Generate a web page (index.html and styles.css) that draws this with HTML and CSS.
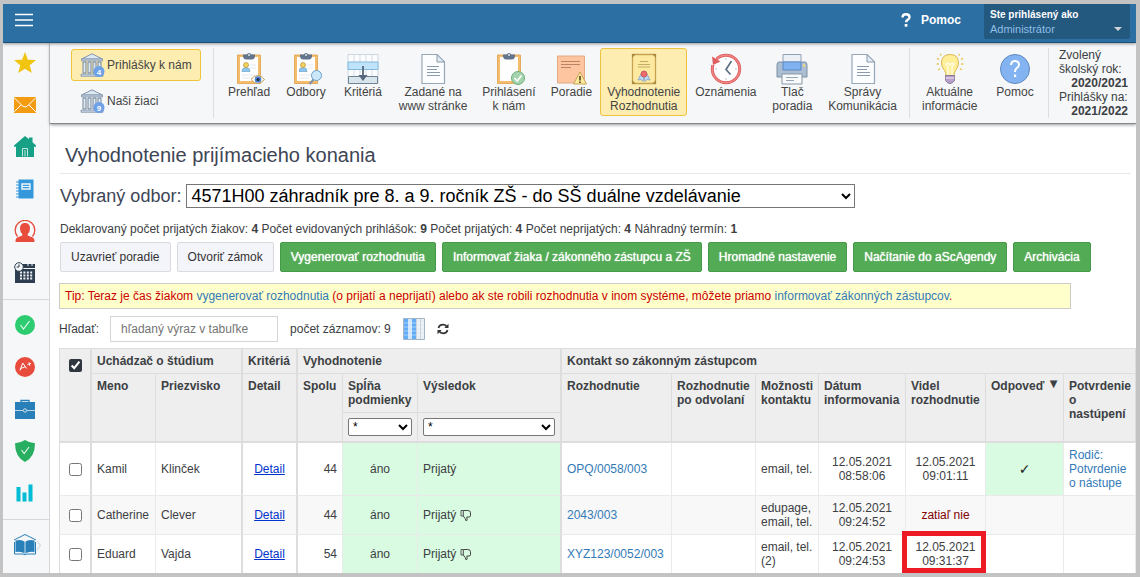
FILE: index.html
```html
<!DOCTYPE html>
<html lang="sk">
<head>
<meta charset="utf-8">
<title>Vyhodnotenie prijímacieho konania</title>
<link rel="stylesheet" href="styles.css">
</head>
<body>
<svg class="defs" width="0" height="0" aria-hidden="true">
  <symbol id="bank" viewBox="0 0 24 24">
    <path d="M12 .8 1.500 6h21z" fill="#dce9f3" stroke="#8496aa"/>
    <path d="M1.500 6h21v2h-21zM1 21h22v2.300H1z" fill="#c3d1df" stroke="#8496aa" stroke-width=".8"/>
    <path d="M3 9h3v11H3zM8 9h3v11H8zM13 9h3v11h-3zM18 9h3v11h-3z" fill="#dfe8f0" stroke="#75889d"/>
  </symbol>
  <symbol id="clip" viewBox="0 0 32 32">
    <path d="M4.500 2h23v28.500h-23z" fill="#f3bd6c" stroke="#e0a04a" stroke-width=".8"/>
    <path d="M7 4h18v24H7z" fill="#fefefe"/>
    <path d="M10 1.500h3.500q2.500-3 5 0H22V4q-1 2.500-3 2.500h-6Q11 6.500 10 4z" fill="#63758c"/>
    <circle cx="16" cy="2" r="1" fill="#dfe7ee"/>
  </symbol>
  <symbol id="person" viewBox="0 0 32 32">
    <path d="M17 12h6M17 15h6M9 22h13M9 25h10" stroke="#e4eaf0" fill="none"/>
    <path d="M9 18.500q0-4 4-4t4 4z" fill="#8fc6ec" stroke="#5e9bc6" stroke-width=".6"/>
    <circle cx="13" cy="12" r="2.500" fill="#f3d55e" stroke="#b08e38" stroke-width=".7"/>
  </symbol>
  <symbol id="doc" viewBox="0 0 32 32">
    <path d="M5 1.500h15l7.500 7.500v21.500H5z" fill="#fbfdfe" stroke="#98a8b8" stroke-width="1.200"/>
    <path d="M20 1.500V9h7.500z" fill="#e4edf4" stroke="#8799aa"/>
    <path d="M10 13.500h12M10 16.500h10M10 19.500h13M10 22.500h13" stroke="#8b9bad" stroke-width="1.200"/>
  </symbol>
  <symbol id="thumb" viewBox="0 0 12 13">
    <path d="M3.300 1.500h4.500q2.700 0 2.700 2.300v3q0 1.200-1.500 1.200H6.800q1 4-.6 4Q5.500 9.500 3.300 7z" fill="none" stroke="#454545"/>
    <path d="M3 1.500H1V7h2" fill="none" stroke="#454545" stroke-width=".9"/>
  </symbol>
</svg>

<div class="app">
  <header class="topbar">
    <button class="burger" aria-label="Menu"><svg width="18" height="14" viewBox="0 0 18 14"><path d="M0 1.500h18M0 7h18M0 12.500h18" stroke="#fff" stroke-width="1.600"/></svg></button>
    <a class="help" href="#"><svg width="10" height="14" viewBox="0 0 10 14"><path d="M1.500 4.500Q1.600 1.300 5 1.300t3.500 2.900q0 1.700-1.900 2.700-1.500.9-1.500 2.400" fill="none" stroke="#fff" stroke-width="2.400"/><path d="M3.700 11h2.700v2.700H3.700z" fill="#fff"/></svg>Pomoc</a>
    <button class="user"><span class="user-label">Ste prihlásený ako</span><span class="user-name">Administrátor</span><svg class="caret" width="8" height="4" viewBox="0 0 8 4"><path d="M0 0h8L4 4z" fill="#d0d4d8"/></svg></button>
  </header>

  <div class="body">
    <nav class="side" aria-label="Moduly">
      <div class="side-group">
        <a href="#" aria-label="Obľúbené"><svg viewBox="0 0 22 22"><path d="M11 0l2.900 7.700 8.100.4-6.300 5.200L17.800 21 11 16.700 4.200 21l2.100-7.700L0 8.100l8.100-.4z" fill="#f1c40f"/></svg></a>
        <a href="#" aria-label="Správy"><svg viewBox="0 0 22 22"><path d="M0 3h22v16H0z" fill="#f39c12"/><path d="M0 3.500 8.500 12q2.500 2 5 0L22 3.500M0 18l7-7M22 18l-7-7" fill="none" stroke="#fff" stroke-width="1"/></svg></a>
        <a href="#" aria-label="Domov"><svg viewBox="0 0 22 22"><path d="M0 9.500 11 0l4 3.200V1.500h3.500v4.700L22 9.500v1.200h-2V21H2V10.700H0z" fill="#16a085"/><path d="M8.500 20.500v-8h5v8M11 14v6.500" fill="none" stroke="#d9f0eb" stroke-width=".9"/></svg></a>
        <a href="#" aria-label="Triedna kniha"><svg viewBox="0 0 22 22"><path d="M4.500 1.500h15v19h-15z" fill="#3498db"/><path d="M2 4h4M2 7h4M2 10h4M2 13h4M2 16h4M2 19h4" stroke="#3498db"/><path d="M8 6h8v5H8z" fill="none" stroke="#eef7fc" stroke-width="1.400"/><path d="M8 8.500h8" stroke="#eef7fc"/></svg></a>
        <a href="#" aria-label="Používatelia"><svg viewBox="0 0 22 22"><path d="M3.500 16.500A9.800 9.800 0 1 1 18.500 16.500" fill="none" stroke="#e74c3c" stroke-width="1.300"/><path d="M11 3q5 0 5 5.500 0 3.500-2.300 5.500v1.500l5 2q1.800.8 1.800 4.500h-19q0-3.700 1.800-4.500l5-2V14Q6 12 6 8.500 6 3 11 3z" fill="#e74c3c"/></svg></a>
        <a href="#" aria-label="Rozvrh"><svg viewBox="0 0 22 22"><path d="M2 2h19v4H2zM1 7h20v14H1z" fill="#2c3e50"/><path d="M6 10.500h13M6 13.500h13M6 16.500h13" stroke="#f0f3f5" stroke-width="1.800" stroke-dasharray="2 1.400"/><circle cx="5" cy="5" r="4.300" fill="#f5f7f9" stroke="#2c3e50"/><path d="M5 2.300V5H2.700" fill="none" stroke="#2c3e50"/><path d="M14 1v3M18 1v3" stroke="#f5f7f9"/></svg></a>
      </div>
      <div class="side-group">
        <a href="#" aria-label="Dochádzka"><svg viewBox="0 0 22 22"><circle cx="11" cy="11" r="10" fill="#2ecc71"/><path d="m6.500 11 3 4 6-8" fill="none" stroke="#eafaf1" stroke-width="1.200"/></svg></a>
        <a href="#" aria-label="Známky"><svg viewBox="0 0 22 22"><circle cx="11" cy="11" r="10" fill="#e74c3c"/><path d="m6 14.500 2.700-7.500 4 5.500M6.500 12.500l5-1.800M13.500 8.500l3.500-1M15 6.300l.8 3.500" fill="none" stroke="#fff"/></svg></a>
        <a href="#" aria-label="Agenda"><svg viewBox="0 0 22 22"><path d="M1 4h20v17H1z" fill="#2980b9"/><path d="M7 4.500V2.500h8v2" fill="none" stroke="#2980b9" stroke-width="1.300"/><path d="M1 12.500h8M13 12.500h8" stroke="#b9d6e8"/><circle cx="11" cy="12.500" r="1.700" fill="none" stroke="#cfe3f0"/></svg></a>
        <a href="#" aria-label="Bezpečnosť"><svg viewBox="0 0 22 22"><path d="M11 0q5 3.200 10 3.300 0 13.700-10 18.700Q1 17 1 3.300 6 3.200 11 0z" fill="#27ae60"/><path d="m7.500 10 2.700 3.500L15 7" fill="none" stroke="#e9f7ef" stroke-width="1.100"/></svg></a>
        <a href="#" aria-label="Štatistiky"><svg viewBox="0 0 22 22"><path d="M2.500 5h4v14.500h-4zM8.500 10.500h4v9h-4zM14.500 2.500h4v17h-4z" fill="#00bcd4"/></svg></a>
      </div>
      <div class="side-group">
        <a href="#" aria-label="Knižnica"><svg class="wide" viewBox="0 0 27 22"><path d="M0 6 11 .500 22 6" fill="none" stroke="#2980b9"/><path d="M1.500 6.500Q7.500 5 11 8q3.500-3 9.500-1.500V18Q15 17 11 19.500 7 17 1.500 18z" fill="#2980b9"/><path d="M.5 8v12H9q2 1.500 4 0h8.500V8" fill="none" stroke="#2980b9"/><path d="M11 8v11" stroke="#cfe3f0"/><path d="m23 7 3.500 4.500L23 16" fill="none" stroke="#d3d7db" stroke-width="1.200"/></svg></a>
      </div>
    </nav>

    <div class="main">
      <nav class="ribbon" aria-label="Prijímacie konanie">
        <div class="modes">
          <a class="mode active" href="#"><svg width="25" height="24" viewBox="0 0 25 24"><use href="#bank" width="24" height="24"/><circle cx="19" cy="18.500" r="5.500" fill="#6ea1e8"/><text class="badge" x="19" y="21.500" text-anchor="middle">4</text></svg>Prihlášky k nám</a>
          <a class="mode" href="#"><svg width="25" height="24" viewBox="0 0 25 24"><use href="#bank" width="24" height="24"/><circle cx="19" cy="18.500" r="5.500" fill="#6ea1e8"/><text class="badge" x="19" y="21.500" text-anchor="middle">9</text></svg>Naši žiaci</a>
        </div>
        <div class="tools">
          <a class="tool" href="#"><svg viewBox="0 0 32 32"><use href="#clip"/><use href="#person"/><path d="M18 26.500q6.500-8 13.500 0-7 8-13.500 0z" fill="#fff" stroke="#c29a53"/><circle cx="25" cy="26.500" r="3.300" fill="#4f82cf"/><circle cx="25" cy="26.500" r="1.500" fill="#222f4b"/></svg>Prehľad</a>
          <a class="tool" href="#"><svg viewBox="0 0 32 32"><use href="#clip"/><use href="#person"/><path d="m24 26-4.500 5" stroke="#7f94a8" stroke-width="2.200"/><circle cx="26.500" cy="22.500" r="5" fill="#cbe8fb" stroke="#6f9fc5"/></svg>Odbory</a>
          <a class="tool" href="#"><svg viewBox="0 0 32 32"><path d="M1 1.500h30v29H1z" fill="#fbfcfd" stroke="#cdd6df"/><path d="M7 1.500v29M13 1.500v29M19 1.500v29M25 1.500v29" stroke="#d5dde5"/><path d="M1 9h30v7.500H1z" fill="#bfe3fb" stroke="#84b9dc"/><path d="M1.500 23.500h29v7h-29z" fill="#d9e5ec" stroke="#6f8394"/><path d="M16 13v11" stroke="#54677d" stroke-width="1.800"/><path d="M11.500 22h9L16 28z" fill="#54677d"/></svg>Kritériá</a>
          <a class="tool" href="#"><svg viewBox="0 0 32 32"><use href="#doc"/></svg>Zadané na<br>www stránke</a>
          <a class="tool" href="#"><svg viewBox="0 0 32 32"><use href="#clip"/><circle cx="25" cy="25" r="6.500" fill="#a5d3ad" stroke="#6fae7c"/><path d="m21.500 25 2.700 3 4.300-5.500" fill="none" stroke="#fff" stroke-width="1.500"/></svg>Prihlásení<br>k nám</a>
          <a class="tool" href="#"><svg viewBox="0 0 32 32"><path d="M2.500 3h27v27h-27z" fill="#fdc5a0" stroke="#e5a886"/><path d="M6 8.500h19M6 11.500h19M6 14.500h10" stroke="#b98364" stroke-width="1.100"/><path d="m25 19 6.500 12h-13z" fill="#fdea9d" stroke="#c5a55b"/><path d="M25 23v4.500M25 28.500V30" stroke="#5b4b28" stroke-width="1.700"/></svg>Poradie</a>
          <a class="tool active" href="#"><svg viewBox="0 0 32 32"><path d="M4.500 1.500h23v29h-23z" fill="#fdeaa0" stroke="#c5a352" stroke-width="1.300"/><path d="M4 1h4L4 5zM28 1h-4l4 4zM4 31h4l-4-4zM28 31h-4l4-4z" fill="#ab8a42"/><path d="M12 8.500h8M10 11.500h12M10 14h12" stroke="#c1ac68" stroke-width="1.100"/><path d="m13 21-3 6 3-.5 2 2 1-5 1 5 2-2 3 .500-3-6z" fill="#bcd9f4" stroke="#7f9fc8" stroke-width=".8"/><circle cx="16" cy="21" r="3" fill="#ee6b6c" stroke="#c0505a" stroke-width=".8"/></svg>Vyhodnotenie<br>Rozhodnutia</a>
          <a class="tool" href="#"><svg viewBox="0 0 32 32"><circle cx="16" cy="16" r="13.700" fill="#fff" stroke="#dc5a5c" stroke-width="3"/><circle cx="16" cy="16" r="13.700" fill="none" stroke="#f18584" stroke-width="1.500"/><path d="M0 5h6v7H0z" fill="#f5f7f9"/><path d="M2 3.500 10.500 8.500 3 12z" fill="#df5f60"/><path d="M21.500 8 16 16.500l4.500 5" fill="none" stroke="#5d7082" stroke-width="1.700"/><path d="M16 5v2M16 25v2M25 16h2M5 16h2" stroke="#b7c4cf"/></svg>Oznámenia</a>
          <a class="tool" href="#"><svg viewBox="0 0 32 32"><path d="M3 9h26q2 0 2 3v12H1V12q0-3 2-3z" fill="#acbed2" stroke="#7c90a6"/><path d="M7 1.500h18V9H7z" fill="#eaf0f5" stroke="#91a2b2"/><path d="M7 9h18v8H7z" fill="#80b2ef" stroke="#5c88c3"/><path d="M6 21h20v10H6z" fill="#f8fafc" stroke="#8796a6"/><path d="M10 24.500h12M10 27.500h8" stroke="#98a6b5"/><circle cx="28" cy="12.500" r="1.200" fill="#f6db74"/></svg>Tlač<br>poradia</a>
          <a class="tool" href="#"><svg viewBox="0 0 32 32"><use href="#doc"/></svg>Správy<br>Komunikácia</a>
        </div>
        <div class="tools last">
          <a class="tool" href="#"><svg viewBox="0 0 32 32"><path d="M16 1.500q8.500 0 8.500 8.500 0 4-3 7.500-1.500 2-1.500 5h-8q0-3-1.500-5-3-3.500-3-7.500 0-8.500 8.500-8.500z" fill="#feef98" stroke="#dcb850"/><path d="M14 22V14l-2-3q2-2 4 1 2-3 4-1l-2 3v8" fill="none" stroke="#fffbe2" stroke-width="1.500"/><path d="M11.500 22.500h9v5q-2 3-4.500 3t-4.500-3z" fill="#b9a2c9" stroke="#87759a"/><path d="M11.500 25h9" stroke="#f0e6f7"/><path d="m6 1 1.500 1.500M26 1l-1.500 1.500M3 5.500l2 1M29 5.500l-2 1M2.500 11H5M29.500 11H27M4 17l2-1.500M28 17l-2-1.500" stroke="#e8cb63" stroke-width="1.500"/></svg>Aktuálne<br>informácie</a>
          <a class="tool" href="#"><svg viewBox="0 0 32 32"><circle cx="16" cy="16" r="14.500" fill="#84b3f2" stroke="#5e88bf"/><path d="M12 12q.4-4 4-4t4 3.500q0 2.400-2.500 3.800-1.500 1-1.500 3.700" fill="none" stroke="#fff" stroke-width="2"/><path d="M15 21.500h2.200V24H15z" fill="#fff"/></svg>Pomoc</a>
        </div>
        <div class="year"><div>Zvolený školský rok:</div><b>2020/2021</b><div>Prihlášky na:</div><b>2021/2022</b></div>
      </nav>

      <main class="content">
        <h1>Vyhodnotenie prijímacieho konania</h1>
        <div class="dept">
          <label for="dept">Vybraný odbor:</label>
          <select id="dept"><option>4571H00 záhradník pre 8. a 9. ročník ZŠ - do SŠ duálne vzdelávanie</option></select>
        </div>
        <p class="stats">Deklarovaný počet prijatých žiakov: <b>4</b> Počet evidovaných prihlášok: <b>9</b> Počet prijatých: <b>4</b> Počet neprijatých: <b>4</b> Náhradný termín: <b>1</b></p>
        <div class="actions">
          <button class="btn">Uzavrieť poradie</button>
          <button class="btn">Otvoriť zámok</button>
          <button class="btn green">Vygenerovať rozhodnutia</button>
          <button class="btn green">Informovať žiaka / zákonného zástupcu a ZŠ</button>
          <button class="btn green">Hromadné nastavenie</button>
          <button class="btn green">Načítanie do aScAgendy</button>
          <button class="btn green">Archivácia</button>
        </div>
        <p class="tip">Tip: Teraz je čas žiakom <a href="#">vygenerovať rozhodnutia</a> (o prijatí a neprijatí) alebo ak ste robili rozhodnutia v inom systéme, môžete priamo <a href="#">informovať zákonných zástupcov</a>.</p>
        <div class="search">
          <label for="q">Hľadať:</label>
          <input id="q" type="text" placeholder="hľadaný výraz v tabuľke">
          <span>počet záznamov: 9</span>
          <button class="icon-btn" aria-label="Stĺpce"><svg width="22" height="22" viewBox="0 0 22 22"><path d="M.5.500h21v21H.5z" fill="#e8eef3" stroke="#a3b4c4"/><path d="M1 1h4v20H1zM9 1h4v20H9z" fill="#62acf8"/><path d="M5 1h4v20H5z" fill="#cfe6fb"/><path d="M1 5h20M1 9h20M1 13h20M1 17h20" stroke="#fff" stroke-opacity=".45"/><path d="M17.500 1v20M13.500 1v20" stroke="#ccd6df"/></svg></button>
          <button class="icon-btn" aria-label="Obnoviť"><svg width="12" height="12" viewBox="0 0 12 12"><path d="M1.500 5Q2.300 1.700 6 1.700q2.200 0 3.700 1.800M10.500 7Q9.700 10.300 6 10.300 3.800 10.300 2.300 8.500" fill="none" stroke="#333" stroke-width="1.800"/><path d="M11.500.8V5H7.300zM.5 11.200V7h4.200z" fill="#333"/></svg></button>
        </div>

        <table class="grid">
          <colgroup><col class="c-check"><col class="c-name"><col class="c-surname"><col class="c-crit"><col class="c-sum"><col class="c-cond"><col class="c-result"><col class="c-dec"><col class="c-appeal"><col class="c-contact"><col class="c-date"><col class="c-seen"><col class="c-answer"><col></colgroup>
          <thead>
            <tr>
              <th rowspan="3" class="g center"><input type="checkbox" class="all" aria-label="Vybrať všetko" checked></th>
              <th colspan="2" class="g">Uchádzač o štúdium</th>
              <th class="g">Kritériá</th>
              <th colspan="3" class="g">Vyhodnotenie</th>
              <th colspan="7">Kontakt so zákonným zástupcom</th>
            </tr>
            <tr>
              <th rowspan="2">Meno</th>
              <th rowspan="2" class="g">Priezvisko</th>
              <th rowspan="2" class="g">Detail</th>
              <th rowspan="2">Spolu</th>
              <th>Spĺňa podmienky</th>
              <th class="g">Výsledok</th>
              <th rowspan="2">Rozhodnutie</th>
              <th rowspan="2">Rozhodnutie po odvolaní</th>
              <th rowspan="2">Možnosti kontaktu</th>
              <th rowspan="2">Dátum informovania</th>
              <th rowspan="2">Videl rozhodnutie</th>
              <th rowspan="2" class="sorted">Odpoveď <span class="sort">▼</span></th>
              <th rowspan="2">Potvrdenie<br>o nastúpení</th>
            </tr>
            <tr class="filters">
              <th><select aria-label="Spĺňa podmienky"><option>*</option></select></th>
              <th class="g"><select aria-label="Výsledok"><option>*</option></select></th>
            </tr>
          </thead>
          <tbody>
            <tr>
              <td class="g center"><input type="checkbox" aria-label="Kamil Klinček"></td>
              <td>Kamil</td><td class="g">Klinček</td>
              <td class="g center"><a class="detail" href="#">Detail</a></td>
              <td class="right">44</td><td class="ok center">áno</td><td class="ok g">Prijatý</td>
              <td><a href="#">OPQ/0058/003</a></td><td></td><td>email, tel.</td>
              <td class="center">12.05.2021 08:58:06</td><td class="center">12.05.2021 09:01:11</td>
              <td class="ok center"><span class="tick">✓</span></td>
              <td><a href="#">Rodič: Potvrdenie o nástupe</a></td>
            </tr>
            <tr>
              <td class="g center"><input type="checkbox" aria-label="Catherine Clever"></td>
              <td>Catherine</td><td class="g">Clever</td>
              <td class="g center"><a class="detail" href="#">Detail</a></td>
              <td class="right">44</td><td class="ok center">áno</td><td class="ok g">Prijatý <svg class="thumb"><use href="#thumb"/></svg></td>
              <td><a href="#">2043/003</a></td><td></td><td>edupage, email, tel.</td>
              <td class="center">12.05.2021 09:24:52</td><td class="center late">zatiaľ nie</td><td></td><td></td>
            </tr>
            <tr>
              <td class="g center"><input type="checkbox" aria-label="Eduard Vajda"></td>
              <td>Eduard</td><td class="g">Vajda</td>
              <td class="g center"><a class="detail" href="#">Detail</a></td>
              <td class="right">54</td><td class="ok center">áno</td><td class="ok g">Prijatý <svg class="thumb"><use href="#thumb"/></svg></td>
              <td><a href="#">XYZ123/0052/003</a></td><td></td><td>email, tel. (2)</td>
              <td class="center">12.05.2021 09:24:53</td><td class="center marked">12.05.2021 09:31:37</td><td></td><td></td>
            </tr>
          </tbody>
        </table>
      </main>
    </div>
  </div>
</div>
</body>
</html>
```
FILE: styles.css
```css
* { box-sizing: border-box; }
body { margin: 0; font: 12px/14px "Liberation Sans", Arial, sans-serif; color: #3c4043; }
a { color: #337ab7; text-decoration: none; }
button { font: inherit; border: 0; background: none; padding: 0; }
svg { flex: none; }
.defs { position: absolute; }

.app { display: flex; flex-direction: column; height: 100vh; overflow: hidden; border: 4px solid #c3c3c3; border-left-width: 3px; background: #fff; }

.topbar { display: flex; flex: none; height: 39px; background: #2b6fa3; border-bottom: 1px solid #1c4f79; box-shadow: 0 1px 3px rgba(0,0,0,.4); position: relative; z-index: 1; padding-right: 6px; }
.burger { width: 42px; height: 32px; display: flex; align-items: center; justify-content: center; }
.help { margin-left: auto; display: flex; gap: 10px; height: 32px; align-items: center; color: #fff; font-weight: bold; margin-right: 23px; }
.user { width: 146px; height: 35px; background: #23587f; border-radius: 0 0 2px 2px; padding: 4px 8px 4px 6px; text-align: left; display: grid; grid-template-columns: 1fr 8px; align-items: center; column-gap: 8px; }
.user-label { grid-column: 1 / 3; font-size: 10px; font-weight: bold; color: #fff; }
.user-name { font-size: 11px; color: #8fbfe8; }

.body { display: flex; flex: 1; min-height: 0; }
.side { width: 47px; flex: none; background: #f5f7f9; border-right: 1px solid #d5d8db; overflow: hidden; }
.side-group { display: flex; flex-direction: column; align-items: center; gap: 20px; padding: 14px 2px 15px 0; border-bottom: 1px solid #d5d8db; }
.side-group:first-child { padding-top: 9px; }
.side-group:last-child { border-bottom: 0; }
.side-group a, .side-group svg { display: block; width: 22px; height: 22px; }
.side-group svg.wide { width: 27px; }

.main { flex: 1; min-width: 0; }
.ribbon { display: flex; background: #f5f7f9; border-bottom: 1px solid #85888b; box-shadow: 0 1px 3px rgba(0,0,0,.4); padding: 5px 4px 5px 21px; height: 81px; }
.modes { width: 143px; flex: none; border-right: 1px solid #dcdfe2; padding: 1px 12px 0 0; display: flex; flex-direction: column; gap: 4px; }
.mode { display: flex; align-items: center; gap: 2px; height: 32px; padding: 0 8px; color: #444; border: 1px solid transparent; border-radius: 3px; white-space: nowrap; }
.badge { font: bold 8px "Liberation Sans", Arial, sans-serif; fill: #fff; }
.tools { display: flex; justify-content: space-between; flex: 1; padding: 0 5px 0 7px; border-right: 1px solid #dcdfe2; align-items: flex-start; }
.tools.last { flex: none; width: 139px; padding: 0 5px; }
.tool { display: block; min-width: 56px; min-height: 68px; padding: 4px 6px 2px; color: #444; border: 1px solid transparent; border-radius: 3px; text-align: center; white-space: nowrap; }
.tool svg { display: block; width: 32px; height: 32px; margin: 0 auto; }
.mode.active, .tool.active { background: #fdedb1; border-color: #f0c33c; }
.year { width: 83px; flex: none; padding: 0 4px 0 10px; }
.year b { display: block; text-align: right; }

.content { padding: 19px 0 0 9px; }
h1 { font-size: 20px; line-height: 24px; font-weight: normal; color: #3d4555; margin: 0 5px 10px 1px; padding: 0 5px 6px; border-bottom: 1px solid #e8e8e8; }
.dept { display: flex; align-items: center; gap: 5px; font-size: 18px; line-height: 24px; padding-left: 1px; color: #3d4555; }
.dept select { font: 18px "Liberation Sans", Arial, sans-serif; width: 669px; height: 24px; color: #000; background: #fff; border: 1px solid #767676; border-radius: 0; padding: 0; }
.stats { margin: 14px 0 6px 1px; }
.actions { display: flex; gap: 6px; padding-left: 1px; }
.btn { height: 30px; padding: 0 10px; background: #f4f5fa; border: 1px solid #d8dade; border-radius: 2px; color: #333; white-space: nowrap; }
.btn.green { background: #53ac55; border-color: #469a49; color: #fff; text-shadow: 0 0 1px #fff; }
.tip { margin: 11px 65px 7px 0; padding: 5px; background: #ffffcc; border: 1px solid #ccc; color: #c00; }
.search { display: flex; align-items: center; gap: 12px; margin-bottom: 6px; }
.search label { margin-right: -1px; }
.search input { width: 168px; height: 26px; border: 1px solid #d5d5d5; padding: 0 10px; font: inherit; }
.icon-btn { display: flex; }

.grid { width: 100%; table-layout: fixed; border-collapse: separate; border-spacing: 0; }
.c-check { width: 33px; } .c-name { width: 64px; } .c-surname { width: 87px; } .c-crit { width: 55px; }
.c-sum { width: 45px; } .c-cond { width: 75px; } .c-result { width: 144px; } .c-dec { width: 110px; }
.c-appeal { width: 84px; } .c-contact { width: 63px; } .c-date { width: 87px; } .c-seen { width: 80px; } .c-answer { width: 78px; }
.grid th { background: #eee; border: 0 solid #ddd; border-width: 0 1px 1px 0; padding: 5px; text-align: left; vertical-align: top; }
.grid thead tr:first-child th { border-top-width: 1px; height: 26px; }
.grid thead th[rowspan], .grid .filters th { border-bottom-width: 2px; }
.grid td { border: 0 solid #eaeaea; border-width: 0 1px 1px 0; padding: 5px; vertical-align: middle; }
.grid th.g, .grid td.g { border-right: 2px solid #ddd; }
.grid th:first-child.center, .grid td:first-child { border-left: 1px solid #ddd; }
.grid tbody tr:nth-child(even) td { background: #f8f8f8; }
.grid .filters th { padding: 5px 5px 4px; height: 30px; }
.grid .filters select { display: block; width: 100%; height: 18px; font: 12px "Liberation Sans", Arial, sans-serif; background: #fff; color: #000; border: 1px solid #767676; border-radius: 2px; padding: 0; }
.grid .sorted { white-space: nowrap; }
.sort { font: 10px/10px "DejaVu Sans", sans-serif; vertical-align: top; margin-left: 2px; }
.grid .center { text-align: center; }
.grid .right { text-align: right; }
.grid tbody tr td.ok { background: #d9fbe1; }
.grid .late { color: #800000; }
.grid input { display: block; width: 13px; height: 13px; margin: 0 auto; }
.grid input.all { accent-color: #2f3640; margin-top: 5px; }
.grid a.detail { color: #0033cc; text-decoration: underline; }
.tick { font: 14px/14px "DejaVu Sans", sans-serif; color: #222; }
.thumb { width: 12px; height: 13px; vertical-align: -3px; }
.marked { position: relative; }
.marked::after { content: ""; position: absolute; inset: -4px -1px 0 -4px; border: 5px solid #ed1c24; }
```
